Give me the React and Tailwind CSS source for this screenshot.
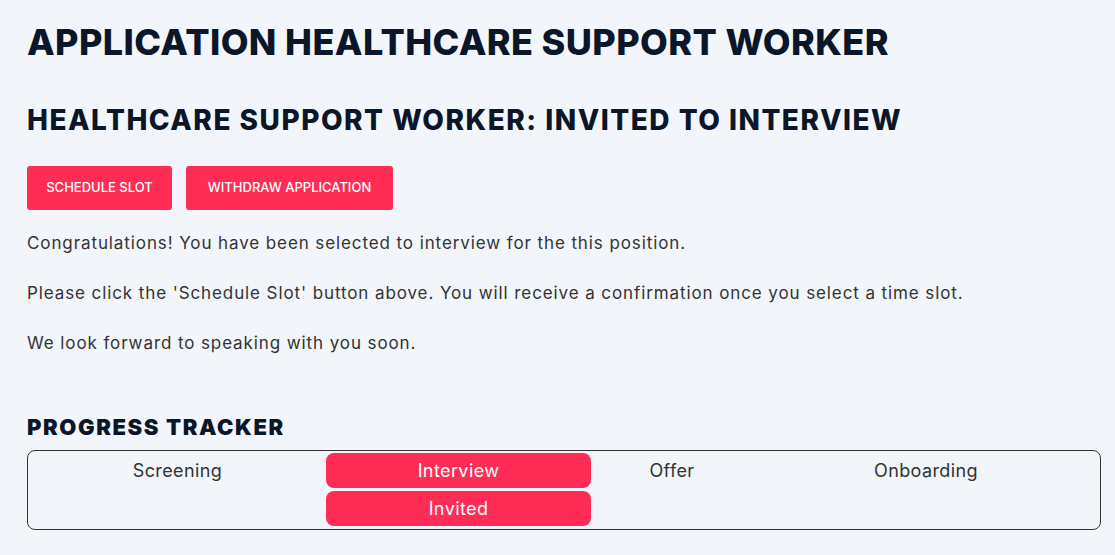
export default function App() {
  const stages = [
    { label: "Screening", width: "w-[297px]" },
    { label: "Interview", width: "w-[265px]", active: true, sub: "Invited" },
    { label: "Offer", width: "w-[162px]" },
    { label: "Onboarding", width: "flex-1" },
  ];

  return (
    <div className="min-h-[555px] bg-[#f2f6fb] px-[27px] pt-[20px] font-['Inter',sans-serif] text-[#333]">
      <h1 className="text-[36px] font-extrabold uppercase leading-[44px] tracking-[0.4px] text-[#0b1628]">
        Application Healthcare Support Worker
      </h1>
      <h2 className="mt-[38px] text-[28px] font-extrabold uppercase leading-[36px] tracking-[1.5px] text-[#0b1628]">
        Healthcare Support Worker: Invited to Interview
      </h2>
      <div className="mt-[28px] flex gap-[14px]">
        <button className="h-[44px] w-[145px] rounded-[3px] bg-[#ff2d55] text-[13px] font-medium uppercase text-white">
          Schedule Slot
        </button>
        <button className="h-[44px] w-[207px] rounded-[3px] bg-[#ff2d55] text-[13px] font-medium uppercase text-white">
          Withdraw Application
        </button>
      </div>
      <div className="mt-[20px] text-[17px] leading-[26px] tracking-[0.9px]">
        <p>Congratulations! You have been selected to interview for the this position.</p>
        <p className="mt-[24px]">
          Please click the 'Schedule Slot' button above. You will receive a confirmation once you select a time slot.
        </p>
        <p className="mt-[24px]">We look forward to speaking with you soon.</p>
      </div>
      <h3 className="mt-[56px] text-[22px] font-black uppercase leading-[30px] tracking-[1.6px] text-[#0b1628]">
        Progress Tracker
      </h3>
      <div className="mt-[8px] flex h-[80px] w-[1074px] rounded-[8px] border border-[#333] px-px py-[2px]">
        {stages.map((s) => (
          <div key={s.label} className={`${s.width} flex flex-col gap-[3px] text-[18px] tracking-[0.4px]`}>
            {s.active ? (
              <>
                <div className="flex h-[35px] items-center justify-center rounded-[8px] bg-[#ff2d55] text-white">
                  {s.label}
                </div>
                <div className="flex h-[35px] items-center justify-center rounded-[8px] bg-[#ff2d55] text-white">
                  {s.sub}
                </div>
              </>
            ) : (
              <div className="flex h-[35px] items-center justify-center">{s.label}</div>
            )}
          </div>
        ))}
      </div>
    </div>
  );
}
